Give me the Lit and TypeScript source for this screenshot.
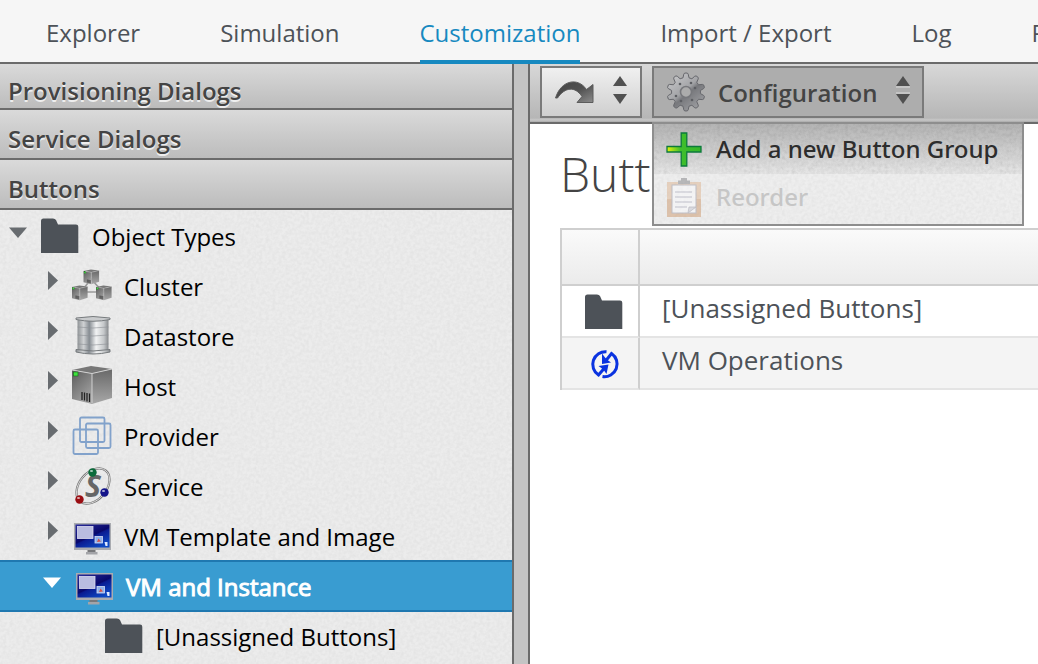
import { LitElement, html, css, svg, nothing } from "lit";
import { customElement, state } from "lit/decorators.js";
import { classMap } from "lit/directives/class-map.js";

interface TreeNode {
  label: string;
  icon: string;
  level: number;
  toggle?: "open" | "closed";
}

const NAV = ["Explorer", "Simulation", "Customization", "Import / Export", "Log", "Requests"];

const SECTIONS = ["Provisioning Dialogs", "Service Dialogs", "Buttons"];

const TREE: TreeNode[] = [
  { label: "Object Types", icon: "folder", level: 1, toggle: "open" },
  { label: "Cluster", icon: "cluster", level: 2, toggle: "closed" },
  { label: "Datastore", icon: "datastore", level: 2, toggle: "closed" },
  { label: "Host", icon: "host", level: 2, toggle: "closed" },
  { label: "Provider", icon: "provider", level: 2, toggle: "closed" },
  { label: "Service", icon: "service", level: 2, toggle: "closed" },
  { label: "VM Template and Image", icon: "monitor", level: 2, toggle: "closed" },
  { label: "VM and Instance", icon: "monitor", level: 2, toggle: "open" },
  { label: "[Unassigned Buttons]", icon: "folder", level: 3 },
];

const GROUPS = [
  { label: "[Unassigned Buttons]", icon: "folder" },
  { label: "VM Operations", icon: "sync" },
];

const cube = (x: number, y: number, s: number) => svg`
  <g transform="translate(${x} ${y}) scale(${s})">
    <path d="M0 5 20 8.500V39L0 34Z" fill="url(#front)" />
    <path d="M20 8.500 40 4V33L20 39Z" fill="url(#side)" />
    <path d="M0 5 19 1 40 4 20 8.500Z" fill="#777" />
    <path d="M0 5 20 8.500 40 4M20 8.500V38" fill="none" stroke="#d0d0d0" stroke-width="1" />
    <rect x="1.500" y="7" width="4.500" height="4" fill="#3ee03e" stroke="#176b17" stroke-width=".6" />
    <path d="M10 27v8M12.500 27.500v8M15 28v8.500M17.500 28.500v8.500" stroke="#222" stroke-width="1.300" />
  </g>`;

const ball = (x: number, y: number, dark: string) => svg`
  <circle cx=${x} cy=${y} r="4.200" fill=${dark} />
  <ellipse cx=${x - 1} cy=${y - 1.5} rx="1.600" ry="1.100" fill="#fff" opacity=".65" />`;

const gradients = svg`
  <defs>
    <linearGradient id="front" x1="0" y1="0" x2=".6" y2="1">
      <stop offset="0" stop-color="#5a5a5a" /><stop offset="1" stop-color="#a2a2a2" />
    </linearGradient>
    <linearGradient id="side" x1="0" y1="0" x2="0" y2="1">
      <stop offset="0" stop-color="#686868" /><stop offset="1" stop-color="#a8a8a8" />
    </linearGradient>
    <linearGradient id="drum">
      <stop offset="0" stop-color="#8f9396" /><stop offset=".2" stop-color="#d0d2d4" />
      <stop offset=".38" stop-color="#868c92" /><stop offset=".6" stop-color="#f2f3f4" />
      <stop offset=".85" stop-color="#c4c7c9" /><stop offset="1" stop-color="#86898c" />
    </linearGradient>
    <linearGradient id="screen" x1="0" y1="0" x2=".7" y2="1">
      <stop offset="0" stop-color="#2a2c9c" /><stop offset=".55" stop-color="#08086c" />
      <stop offset=".6" stop-color="#0a1c92" /><stop offset="1" stop-color="#0d49c4" />
    </linearGradient>
    <linearGradient id="metal" x1="0" y1="0" x2=".8" y2="1">
      <stop offset="0" stop-color="#cfcfd1" /><stop offset=".5" stop-color="#a3a4a7" />
      <stop offset=".6" stop-color="#77787c" /><stop offset="1" stop-color="#a0a1a4" />
    </linearGradient>
    <linearGradient id="arrow" x1="0" y1="0" x2="1" y2="1">
      <stop offset="0" stop-color="#444" /><stop offset=".5" stop-color="#505050" /><stop offset="1" stop-color="#8c8c8c" />
    </linearGradient>
    <linearGradient id="plus">
      <stop offset="0" stop-color="#e4f20c" /><stop offset=".4" stop-color="#3fbf2c" /><stop offset="1" stop-color="#35b52a" />
    </linearGradient>
  </defs>`;

const gearOutline = (teeth: number, inner: number, outer: number) => {
  const step = 360 / teeth;
  const at = (deg: number, r: number) => {
    const a = ((deg - 90) * Math.PI) / 180;
    return `${(20 + r * Math.cos(a)).toFixed(2)} ${(20 + r * Math.sin(a)).toFixed(2)}`;
  };
  const points: string[] = [];
  for (let i = 0; i < teeth; i++) {
    const c = i * step;
    points.push(at(c - 12, inner), at(c - 7, outer - 1), at(c - 4, outer), at(c + 4, outer), at(c + 7, outer - 1), at(c + 12, inner));
  }
  return `M${points.join("L")}Z`;
};

const ART: Record<string, () => unknown> = {
  folder: () => svg`
    <path d="M1 38V6q0-2.500 2.500-2.500H13q2 0 3 1.500l2 4.500H36q2.300 0 2.300 2.300V38Z" fill="#4d5258" />`,
  cluster: () => svg`
    <path d="M19 14 9 27H31Z" fill="none" stroke="#999" stroke-width="1.600" />
    ${cube(11.5, 4, 0.39)} ${cube(0, 20, 0.39)} ${cube(24, 20, 0.39)}`,
  datastore: () => svg`
    <path d="M5.500 4H36.500V36H5.500Z" fill="url(#drum)" />
    <path d="M5.500 12q15 2 31 0M5.500 20q15 2 31 0M5.500 29q15 2 31 0" stroke="#8d9195" fill="none" stroke-width=".6" />
    <path d="M4 3q17-3 34 0v1.500q-17 3.500-34 0Z" fill="#c9cbcd" stroke="#777b7e" stroke-width="1" />
    <path d="M4 34.500q17 3 34 0v2.500q-17 4-34 0Z" fill="url(#drum)" stroke="#777b7e" stroke-width="1" />`,
  host: () => cube(0, 0, 1),
  provider: () => svg`
    <g fill="none" stroke="#7d9fca" stroke-width="1.800" opacity=".95">
      <rect x="8" y="2.500" width="24.500" height="24.500" rx="1.500" />
      <rect x="14" y="8.500" width="24.500" height="24.500" rx="1.500" />
      <rect x="1.500" y="14.500" width="24.500" height="24.500" rx="1.500" />
    </g>`,
  service: () => svg`
    <g fill="none" transform="rotate(-50 21 21)">
      <ellipse cx="21" cy="21" rx="20" ry="13.500" stroke="#777" stroke-width="2.200" />
      <ellipse cx="21" cy="21" rx="20" ry="13.500" stroke="#ddd" stroke-width=".9" />
    </g>
    <text x="13" y="32" class="glyph">S</text>
    ${ball(20.5, 7.5, "#0b6a3a")} ${ball(32.5, 27.5, "#14148a")} ${ball(7.5, 34.5, "#9a0d12")}`,
  monitor: () => svg`
    <rect x="2" y="8" width="37" height="27" fill="#a9abb0" />
    <rect x="3.500" y="9.500" width="34" height="23" fill="url(#screen)" />
    <rect x="5.500" y="11.500" width="15.500" height="12" fill="#b9bce0" stroke="#dcdcf0" stroke-width=".8" />
    <rect x="23" y="21.500" width="7.500" height="6.500" fill="#8fb0e8" stroke="#d6def4" stroke-width=".8" />
    <path d="M25 27 26.500 23.500 29 26.500Z" fill="#d4514a" />
    <path d="M32.500 27h3v4h-2Z" fill="#dfe9ff" />
    <path d="M15.500 35h8v3h-8Z" fill="#77787b" />
    <path d="M14 37h11.500v2.500H14Z" fill="#a3a4a8" />`,
  sync: () => svg`
    <g fill="none" stroke="#0a33e0" stroke-width="3">
      <path d="M22.500 8.700A12.700 12.700 0 0 0 14.500 32L20.500 25" />
      <path d="M18.500 33.600A12.700 12.700 0 0 0 27.500 10.500L22 17.500" />
    </g>
    <path d="M14.500 23 24.500 21.500 22.500 31 20 27.500 18 25.500Z" fill="#0a33e0" />
    <path d="M18 10.500 21 14.500 23.500 17 27 19.500 18 21Z" fill="#0a33e0" />`,
  redo: () => svg`
    <path d="M1.500 26C7 8 24 5 32.500 17.500L39 12.500V30.500H23L28 24.500C21 14 11 15 3.500 26Z" fill="url(#arrow)" stroke="#5c5c5c" stroke-width="1" />`,
  gear: () => svg`
    <path d=${gearOutline(10, 14.5, 19)} fill="url(#metal)" stroke="#66676c" stroke-width="1" />
    <circle cx="20" cy="20" r="5.500" fill="#acacac" stroke="#77787c" stroke-width="1.600" />
    <g fill="#5d5e63"><circle cx="14" cy="12" r="1.300" /><circle cx="25" cy="11" r="1.300" />
    <circle cx="29" cy="16" r="1.300" /><circle cx="26" cy="28" r="1.300" />
    <circle cx="15" cy="29" r="1.300" /><circle cx="10" cy="24" r="1.300" /></g>`,
  plus: () => svg`
    <path d="M17.200 4h5.600v13.500H37v5.500H22.800V37h-5.600V23H3v-5.500h14.200Z" fill="url(#plus)" stroke="#0c7a3c" stroke-width="1.300" />`,
  clipboard: () => svg`
    <rect x="3" y="4" width="34" height="35" fill="#c98f5e" />
    <rect x="3" y="4" width="34" height="17" fill="#dcae86" />
    <rect x="8" y="7" width="24" height="28" fill="#fcfcff" stroke="#8a8a9a" />
    <path d="M11 14h17M11 19h17M11 24h17M11 29h12" stroke="#8c8ca4" stroke-width="1.200" />
    <path d="M24 35 25 29H32Z" fill="#c4c4d0" stroke="#8a8a9a" stroke-width=".8" />
    <path d="M14 6V2.500h3V0h6v2.500h3V6Z" fill="#77787c" />`,
};

const icon = (name: string) => html`
  <svg class="icon" viewBox="0 0 40 40" aria-hidden="true">${gradients}${ART[name]()}</svg>`;

const updown = html`
  <svg class="updown" viewBox="0 0 16 30" aria-hidden="true">
    <path d="M8 1 15 11H1Z" fill="#505050" /><path d="M1 12H15" stroke="#ddd" />
    <path d="M8 29 15 19H1Z" fill="#505050" /><path d="M1 18H15" stroke="#ddd" />
  </svg>`;

@customElement("app-root")
export class AppRoot extends LitElement {
  @state() private tab = "Customization";
  @state() private selected = "VM and Instance";
  @state() private menuOpen = true;

  static styles = css`
    :host {
      display: flex;
      flex-direction: column;
      height: 100vh;
      overflow: hidden;
      background: #fff;
      color: #4d5258;
      font: 24px/32px "Open Sans", "Noto Sans", sans-serif;
      --grain: url("data:image/svg+xml,%3Csvg xmlns='http://www.w3.org/2000/svg' width='128' height='128'%3E%3Cfilter id='n'%3E%3CfeTurbulence type='fractalNoise' baseFrequency='.3' numOctaves='2' stitchTiles='stitch'/%3E%3CfeColorMatrix values='0 0 0 0 0 0 0 0 0 0 0 0 0 0 0 .5 .5 0 0 -.4'/%3E%3C/filter%3E%3Crect width='128' height='128' filter='url(%23n)' opacity='.1'/%3E%3C/svg%3E");
    }
    * { box-sizing: border-box; }
    button { font: inherit; color: inherit; border: 0; margin: 0; padding: 0; background: none; text-align: left; }
    ul { list-style: none; margin: 0; padding: 0; }

    .nav {
      flex: none;
      display: flex;
      gap: 80px;
      height: 64px;
      padding-left: 46px;
      background: #f6f6f6;
      border-bottom: 2px solid #6b6b6b;
      white-space: nowrap;
    }
    .tab { height: 64px; padding-top: 17px; color: #4d5258; text-decoration: none; }
    .tab.active { color: #1789c0; border-bottom: 4px solid #1789c0; }

    .body { flex: 1; display: flex; min-height: 0; }
    .sidebar {
      flex: none;
      width: 514px;
      overflow: hidden;
      border-right: 2px solid #6b6b6b;
      background: var(--grain) #ececec;
    }
    .section {
      display: block;
      width: 100%;
      height: 50px;
      padding: 0 8px 2px;
      border-bottom: 2px solid #6b6b6b;
      background: linear-gradient(#dadada, #bcbcbc);
      color: #444;
      font-weight: 600;
      line-height: 58px;
      text-shadow: 0 2px 0 #eee;
    }
    .section.first { height: 46px; line-height: 54px; }
    .tree { padding-top: 2px; }
    .node { display: flex; width: 100%; height: 50px; color: #000; white-space: nowrap; }
    .level-1 { padding-left: 8px; }
    .level-2 { padding-left: 40px; }
    .level-3 { padding-left: 72px; }
    .node.selected {
      height: 52px;
      margin-top: -2px;
      padding-left: 42px;
      color: #fff;
      background: #399cd1;
      border: solid #1f78b0;
      border-width: 2px 0;
      -webkit-text-stroke: 1px #fff;
    }
    .arrow { flex: none; width: 32px; height: 40px; }
    .icon { flex: none; width: 40px; height: 40px; margin-top: 3px; }
    .label { padding: 9px 0 0 12px; }
    .glyph { font: italic 700 30px "Open Sans", sans-serif; fill: #666; }

    .splitter { flex: none; width: 16px; background: #c4c4c4; border-right: 2px solid #6b6b6b; }

    .main { flex: 1; min-width: 0; }
    .toolbar {
      display: flex;
      gap: 10px;
      height: 60px;
      padding: 2px 10px;
      border-bottom: 2px solid #6b6b6b;
      background: linear-gradient(#d8d8d8, #b6b6b6 54px, #c8c8c8 56px, #aaa);
    }
    .tool {
      display: flex;
      align-items: center;
      height: 52px;
      padding: 0 12px;
      border: 2px solid #7a7a7a;
      background: linear-gradient(#f0f0f0, #cfcfcf);
    }
    .tool .icon { margin-top: 0; }
    .tool .updown { flex: none; width: 16px; height: 30px; margin: 0 0 4px 18px; }
    .tool.pressed { padding-right: 11px; background: #adadad; color: #444; font-weight: 600; }
    .tool.pressed .icon { margin-right: 12px; }
    .tool span { padding-top: 2px; }
    .dropdown { position: relative; }
    .menu {
      position: absolute;
      z-index: 2;
      top: 56px;
      left: 0;
      width: 372px;
      border: 2px solid #8e8e8e;
      background: var(--grain) #eee;
    }
    .item {
      display: flex;
      width: 100%;
      height: 48px;
      padding-left: 10px;
      color: #2d2d2d;
      font-family: "Noto Sans", sans-serif;
      font-weight: 500;
      white-space: nowrap;
    }
    .item:first-child { height: 50px; background: var(--grain), var(--grain), linear-gradient(#b4b4b4, #e6e6e6); }
    .item .icon { margin-top: 5px; }
    .item:disabled { height: 50px; color: #c6c6c6; }
    .item:disabled .icon { margin-top: 4px; opacity: .45; }
    .item:disabled .label { padding-top: 7px; }

    .content { padding: 16px 0 0 30px; }
    h1 { margin: 0; height: 88px; font: 300 48px/68px "Open Sans", sans-serif; color: #444; }
    table { width: 100%; border-collapse: separate; border-spacing: 0; border: solid #cfcfcf; border-width: 2px 0 0 2px; table-layout: fixed; }
    th, td { padding: 0; text-align: left; font-size: 26px; font-weight: 400; }
    th { height: 56px; border-bottom: 2px solid #cfcfcf; background: linear-gradient(#fafafa, #ebebeb); }
    td { height: 52px; border-bottom: 2px solid #e4e4e4; }
    tr:nth-child(even) td { background: #f4f4f4; }
    .pic { width: 78px; border-right: 2px solid #cfcfcf; }
    td.pic { padding: 0 0 4px 22px; }
    .pic .icon { display: block; }
    .name { padding: 0 22px 6px; white-space: nowrap; }
  `;

  private arrow(node: TreeNode) {
    if (!node.toggle) return html`<span class="arrow"></span>`;
    const fill = node.label === this.selected ? "#fff" : "#686c70";
    return html`<svg class="arrow" viewBox="0 0 32 40" aria-hidden="true">
      ${node.toggle === "open"
        ? svg`<path d="M1 15.500H19L10 26Z" fill=${fill} />`
        : svg`<path d="M8 9V28L18 18.500Z" fill=${fill} />`}
    </svg>`;
  }

  render() {
    return html`
      <nav class="nav">
        ${NAV.map((name) => html`<a href="#" class=${classMap({ tab: true, active: name === this.tab })}
          @click=${(e: Event) => { e.preventDefault(); this.tab = name; }}>${name}</a>`)}
      </nav>
      <div class="body">
        <aside class="sidebar">
          ${SECTIONS.map((name, i) => html`<button class=${classMap({ section: true, first: i === 0 })}>${name}</button>`)}
          <ul class="tree">
            ${TREE.map((n) => html`<li>
              <button class=${classMap({ node: true, [`level-${n.level}`]: true, selected: n.label === this.selected })}
                @click=${() => (this.selected = n.label)}>
                ${this.arrow(n)}${icon(n.icon)}<span class="label">${n.label}</span>
              </button>
            </li>`)}
          </ul>
        </aside>
        <div class="splitter"></div>
        <main class="main">
          <div class="toolbar">
            <button class="tool" aria-label="History">${icon("redo")}${updown}</button>
            <div class="dropdown">
              <button class="tool pressed" aria-expanded=${this.menuOpen ? "true" : "false"}
                @click=${() => (this.menuOpen = !this.menuOpen)}>
                ${icon("gear")}<span>Configuration</span>${updown}
              </button>
              ${this.menuOpen ? html`<div class="menu">
                <button class="item">${icon("plus")}<span class="label">Add a new Button Group</span></button>
                <button class="item" disabled>${icon("clipboard")}<span class="label">Reorder</span></button>
              </div>` : nothing}
            </div>
          </div>
          <div class="content">
            <h1>Buttons</h1>
            <table aria-label="Buttons">
              <thead><tr><th class="pic"></th><th></th></tr></thead>
              <tbody>
                ${GROUPS.map((g) => html`<tr><td class="pic">${icon(g.icon)}</td><td class="name">${g.label}</td></tr>`)}
              </tbody>
            </table>
          </div>
        </main>
      </div>`;
  }
}
